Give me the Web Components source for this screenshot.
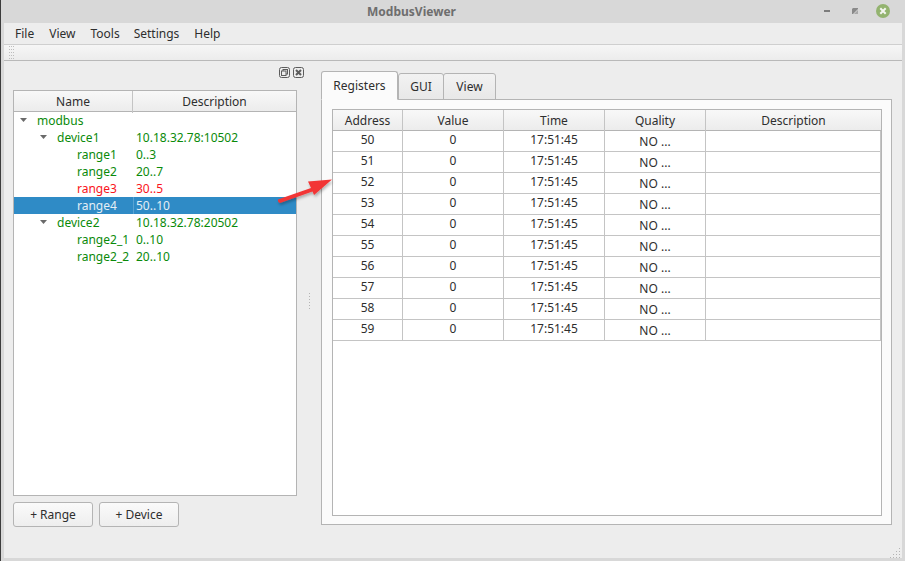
<!DOCTYPE html>
<html>
<head>
<meta charset="utf-8">
<title>ModbusViewer</title>
<style>
    html, body { margin: 0; padding: 0; background: #d8d8d8; }
    body { font: 12px "Noto Sans", sans-serif; color: #2e2e2e; overflow: hidden; }
</style>
</head>
<body>
<app-window>
    <title-bar slot="title">ModbusViewer</title-bar>
    <menu-bar slot="menu"></menu-bar>
    <tool-bar slot="tool"></tool-bar>
    <tree-panel slot="left"></tree-panel>
    <tab-panel slot="right">
        <register-table></register-table>
    </tab-panel>
</app-window>

<script>
const gripDots = (cols, rows) => {
    let out = ''
    for (let y = 0; y < rows; y++) {
        for (let x = 0; x < cols; x++) {
            out += `<rect x="${x * 2}" y="${y * 3}" width="1" height="1"/>`
        }
    }
    return out
}

class AppWindow extends HTMLElement {
    constructor() {
        super()
        this.attachShadow({ mode: 'open' }).innerHTML = `
            <style>
                :host {
                    display: flex;
                    flex-direction: column;
                    position: relative;
                    box-sizing: border-box;
                    width: 905px;
                    height: 561px;
                    border-left: 1px solid #3c3c3c;
                    background: #d8d8d8;
                }
                .body {
                    flex: 1;
                    min-height: 0;
                    display: flex;
                    flex-direction: column;
                    margin: 0 3px 3px 3px;
                    background: #ededed;
                    position: relative;
                }
                .main {
                    flex: 1;
                    min-height: 0;
                    display: flex;
                }
                .split {
                    width: 24px;
                    flex: none;
                    box-sizing: border-box;
                    display: flex;
                    align-items: center;
                    justify-content: center;
                    padding: 0 0 18px 1px;
                }
                .split svg { fill: #b4b4b4; }
                .corner {
                    position: absolute;
                    right: 0;
                    bottom: 0;
                    fill: #b4b4b4;
                }
                .arrow {
                    position: absolute;
                    left: 271px;
                    top: 173px;
                    pointer-events: none;
                }
            </style>
            <slot name="title"></slot>
            <div class="body">
                <slot name="menu"></slot>
                <slot name="tool"></slot>
                <div class="main">
                    <slot name="left"></slot>
                    <div class="split">
                        <svg width="1" height="16">${gripDots(1, 6)}</svg>
                    </div>
                    <slot name="right"></slot>
                </div>
                <svg class="corner" width="13" height="11" viewBox="0 0 13 11">
                    <rect x="10" y="1" width="1" height="1"/>
                    <rect x="10" y="4" width="1" height="1"/><rect x="7" y="4" width="1" height="1"/>
                    <rect x="10" y="7" width="1" height="1"/><rect x="7" y="7" width="1" height="1"/><rect x="4" y="7" width="1" height="1"/>
                    <rect x="10" y="10" width="1" height="1"/><rect x="7" y="10" width="1" height="1"/><rect x="4" y="10" width="1" height="1"/><rect x="1" y="10" width="1" height="1"/>
                </svg>
            </div>
            <svg class="arrow" width="70" height="40" viewBox="272 173 70 40">
                <defs>
                    <filter id="sh" x="-20%" y="-30%" width="150%" height="180%">
                        <feDropShadow dx="1" dy="2" stdDeviation="1.6" flood-color="#000" flood-opacity=".3"/>
                    </filter>
                </defs>
                <path d="M278 199.5 Q277.5 202 280 203 L312.5 191.5 L314 195 L332 179.5 L308 181.5 L311 188 Z" fill="#f23535" filter="url(#sh)"/>
            </svg>
        `
    }
}

class TitleBar extends HTMLElement {
    constructor() {
        super()
        this.attachShadow({ mode: 'open' }).innerHTML = `
            <style>
                :host {
                    display: flex;
                    align-items: center;
                    flex: none;
                    height: 23px;
                    position: relative;
                    background: #d8d8d8;
                    color: #6e6e6e;
                    font-weight: 700;
                    font-size: 12px;
                }
                .t { width: 821px; text-align: center; }
                .btns {
                    position: absolute;
                    right: 0;
                    top: 0;
                }
            </style>
            <div class="t"><slot></slot></div>
            <svg class="btns" width="84" height="23" viewBox="821 0 84 23">
                <rect x="824" y="10" width="6" height="2" fill="#7c7c7c"/>
                <path d="M853 8 h5 v1 l-5 5 h-1 v-5 z" fill="#8a8a8a"/>
                <path d="M858 10 v4 h-4 z" fill="#a8a8a8"/>
                <circle cx="883" cy="11" r="7" fill="#93b36f"/>
                <path d="M880.3 8.3 L885.7 13.7 M885.7 8.3 L880.3 13.7" stroke="#f4f6f0" stroke-width="2"/>
            </svg>
        `
    }
}

class MenuBar extends HTMLElement {
    constructor() {
        super()
        this.attachShadow({ mode: 'open' }).innerHTML = `
            <style>
                :host {
                    display: flex;
                    flex: none;
                    height: 21px;
                    align-items: center;
                    box-sizing: border-box;
                    padding-left: 11px;
                    background: #ededed;
                    color: #2e2e2e;
                    font-size: 12px;
                }
                span { margin-right: 15px; }
                span.tight { margin-right: 14px; }
            </style>
            <span>File</span><span>View</span><span class="tight">Tools</span><span>Settings</span><span>Help</span>
        `
    }
}

class ToolBar extends HTMLElement {
    constructor() {
        super()
        this.attachShadow({ mode: 'open' }).innerHTML = `
            <style>
                :host {
                    display: flex;
                    flex: none;
                    height: 17px;
                    box-sizing: border-box;
                    align-items: center;
                    padding-left: 5px;
                    border-top: 1px solid #cfcfcf;
                    border-bottom: 1px solid #b9b9b9;
                    background: linear-gradient(#f6f6f6, #ececec);
                }
                svg { fill: #bdbdbd; }
            </style>
            <svg width="5" height="13">${gripDots(3, 5)}</svg>
        `
    }
}

class TreeRow extends HTMLElement {
    constructor() {
        super()
        this.attachShadow({ mode: 'open' }).innerHTML = `
            <style>
                :host {
                    display: grid;
                    grid-template-columns: 119px 1fr;
                    height: 17px;
                    line-height: 17px;
                    color: #0a8a0a;
                    white-space: nowrap;
                }
                :host([bad]) { color: #fa1420; }
                :host([selected]) { background: #2f8bc6; color: #e4eef5; }
                :host([selected]) .desc { box-shadow: inset 1px 0 #5aa3d3; }
                .name { position: relative; }
                .desc { padding-left: 3px; }
                svg { position: absolute; top: 6px; fill: #6a6a6a; }
            </style>
            <div class="name"></div>
            <div class="desc"><slot></slot></div>
        `
    }
    connectedCallback() {
        const level = Number(this.getAttribute('level'))
        const name = this.shadowRoot.querySelector('.name')
        name.style.paddingLeft = (23 + level * 20) + 'px'
        let html = this.getAttribute('name')
        if (level < 2) {
            html += `<svg width="7" height="4" style="left:${6 + level * 20}px"><path d="M0 0h7L3.5 4z"/></svg>`
        }
        name.innerHTML = html
    }
}

class TreePanel extends HTMLElement {
    constructor() {
        super()
        this.attachShadow({ mode: 'open' }).innerHTML = `
            <style>
                :host {
                    display: flex;
                    flex-direction: column;
                    flex: none;
                    box-sizing: border-box;
                    width: 293px;
                    padding: 0 0 31px 9px;
                }
                .dock {
                    height: 29px;
                    flex: none;
                    display: flex;
                    justify-content: flex-end;
                    gap: 3px;
                    padding-top: 6px;
                    box-sizing: border-box;
                    margin-right: -7px;
                }
                .dock svg { fill: none; stroke: #5c5c5c; }
                .tree {
                    flex: 1;
                    min-height: 0;
                    border: 1px solid #b4b4b4;
                    background: #fff;
                }
                .head {
                    display: grid;
                    grid-template-columns: 118px 1fr;
                    height: 21px;
                    box-sizing: border-box;
                    border-bottom: 1px solid #b4b4b4;
                    background: linear-gradient(#f8f8f8, #ececec);
                    line-height: 22px;
                    text-align: center;
                }
                .head div + div { border-left: 1px solid #c4c4c4; }
                .actions {
                    flex: none;
                    display: flex;
                    gap: 6px;
                    margin-top: 6px;
                }
            </style>
            <div class="dock">
                <svg width="11" height="11" viewBox="0 0 11 11"><rect x=".5" y=".5" width="10" height="10" rx="2"/><rect x="4" y="2.5" width="4.5" height="4.5"/><rect x="2.5" y="4" width="4.5" height="4.5" fill="#ededed"/></svg>
                <svg width="11" height="11" viewBox="0 0 11 11"><rect x=".5" y=".5" width="10" height="10" rx="2"/><path d="M3 3l5 5M8 3l-5 5" stroke-width="2"/></svg>
            </div>
            <div class="tree">
                <div class="head"><div>Name</div><div>Description</div></div>
                <div class="rows">
                    <tree-row level="0" name="modbus"></tree-row>
                    <tree-row level="1" name="device1">10.18.32.78:10502</tree-row>
                    <tree-row level="2" name="range1">0..3</tree-row>
                    <tree-row level="2" name="range2">20..7</tree-row>
                    <tree-row level="2" name="range3" bad>30..5</tree-row>
                    <tree-row level="2" name="range4" selected>50..10</tree-row>
                    <tree-row level="1" name="device2">10.18.32.78:20502</tree-row>
                    <tree-row level="2" name="range2_1">0..10</tree-row>
                    <tree-row level="2" name="range2_2">20..10</tree-row>
                </div>
            </div>
            <div class="actions">
                <push-button>+ Range</push-button>
                <push-button>+ Device</push-button>
            </div>
        `
    }
}

class PushButton extends HTMLElement {
    constructor() {
        super()
        this.attachShadow({ mode: 'open' }).innerHTML = `
            <style>
                :host {
                    display: block;
                    box-sizing: border-box;
                    width: 80px;
                    height: 25px;
                    line-height: 23px;
                    text-align: center;
                    border: 1px solid #b4b4b4;
                    border-radius: 3px;
                    background: linear-gradient(#fafafa, #eeeeee);
                    color: #2e2e2e;
                }
            </style>
            <slot></slot>
        `
    }
}

class TabPanel extends HTMLElement {
    constructor() {
        super()
        this.attachShadow({ mode: 'open' }).innerHTML = `
            <style>
                :host {
                    display: flex;
                    flex-direction: column;
                    flex: none;
                    width: 571px;
                    padding: 10px 0 33px 0;
                    box-sizing: border-box;
                }
                .tabs { display: flex; height: 29px; flex: none; align-items: flex-end; position: relative; z-index: 1; margin-bottom: -1px; }
                .tab {
                    box-sizing: border-box;
                    height: 27px;
                    line-height: 26px;
                    text-align: center;
                    border: 1px solid #b4b4b4;
                    border-radius: 3px 3px 0 0;
                    margin-left: -1px;
                    background: linear-gradient(#f2f2f2, #e8e8e8);
                }
                .tab.on {
                    height: 29px;
                    line-height: 28px;
                    margin-left: 0;
                    margin-right: 1px;
                    border-bottom-color: #fbfbfb;
                    background: #fbfbfb;
                }
                .pane {
                    flex: 1;
                    min-height: 0;
                    display: flex;
                    box-sizing: border-box;
                    border: 1px solid #b4b4b4;
                    background: #fbfbfb;
                    padding: 9px 9px 8px 10px;
                }
            </style>
            <div class="tabs">
                <div class="tab on" style="width:77px">Registers</div>
                <div class="tab" style="width:46px">GUI</div>
                <div class="tab" style="width:53px">View</div>
            </div>
            <div class="pane"><slot></slot></div>
        `
    }
}

class RegisterTable extends HTMLElement {
    constructor() {
        super()
        const rows = []
        for (let a = 50; a < 60; a++) {
            rows.push(`<div class="row"><div>${a}</div><div>0</div><div>17:51:45</div><div class="q">NO ...</div><div></div></div>`)
        }
        this.attachShadow({ mode: 'open' }).innerHTML = `
            <style>
                :host {
                    display: block;
                    flex: 1;
                    box-sizing: border-box;
                    border: 1px solid #b4b4b4;
                    background: #fff;
                }
                .row, .head {
                    display: grid;
                    grid-template-columns: 70px 101px 101px 101px 1fr;
                    box-sizing: border-box;
                    height: 21px;
                    text-align: center;
                    line-height: 18px;
                    border-bottom: 1px solid #c4c4c4;
                }
                .row div { border-right: 1px solid #c4c4c4; }
                .q { padding-top: 1px; line-height: 19px; height: 19px; }
                .head {
                    line-height: 22px;
                    border-bottom: 1px solid #b4b4b4;
                    background: linear-gradient(#f8f8f8, #ececec);
                }
                .head div { border-right: 1px solid #c4c4c4; }
                .head div:last-child { border-right: none; }
            </style>
            <div class="head"><div>Address</div><div>Value</div><div>Time</div><div>Quality</div><div>Description</div></div>
            ${rows.join('')}
        `
    }
}

customElements.define('app-window', AppWindow)
customElements.define('title-bar', TitleBar)
customElements.define('menu-bar', MenuBar)
customElements.define('tool-bar', ToolBar)
customElements.define('tree-row', TreeRow)
customElements.define('tree-panel', TreePanel)
customElements.define('push-button', PushButton)
customElements.define('tab-panel', TabPanel)
customElements.define('register-table', RegisterTable)
</script>
</body>
</html>
